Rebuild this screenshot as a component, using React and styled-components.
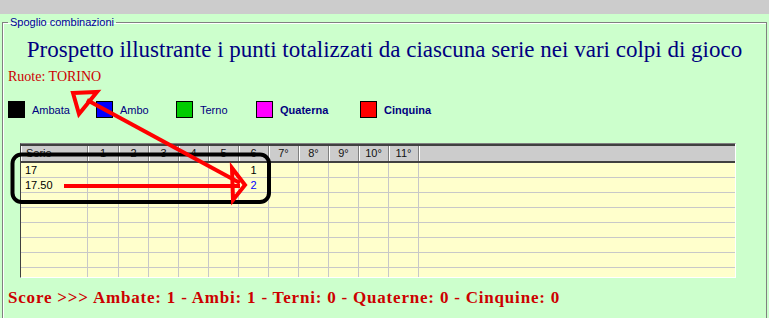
import React from 'react';
import styled, { createGlobalStyle } from 'styled-components';

const GlobalStyle = createGlobalStyle`
  html, body {
    margin: 0;
    padding: 0;
    background: #ccffcc;
    font-family: "Liberation Sans", Arial, sans-serif;
  }
`;

const legendItems = [
  { label: 'Ambata', color: '#000000', width: 88 },
  { label: 'Ambo', color: '#0000ff', width: 80 },
  { label: 'Terno', color: '#00cc00', width: 80 },
  { label: 'Quaterna', color: '#ff00ff', width: 104, bold: true },
  { label: 'Cinquina', color: '#ff0000', width: 100, bold: true },
];

const headers = ['Serie', '1', '2', '3', '4', '5', '6', '7°', '8°', '9°', '10°', '11°', ''];

const rows = [
  ['17', '', '', '', '', '', '1'],
  ['17.50', '', '', '', '', '', { value: '2', hit: true }],
  [], [], [], [], [], [],
];

const App = () => {
  return (
    <Page>
      <GlobalStyle />
      <TopBar />
      <Frame>
        <FrameLegend>Spoglio combinazioni</FrameLegend>
        <Title>Prospetto illustrante i punti totalizzati da ciascuna serie nei vari colpi di gioco</Title>
        <Wheel>Ruote: TORINO</Wheel>
        <KeyRow>
          {legendItems.map(item => (
            <KeyItem key={item.label} width={item.width}>
              <Swatch color={item.color} />
              <KeyLabel bold={item.bold}>{item.label}</KeyLabel>
            </KeyItem>
          ))}
        </KeyRow>
        <Grid>
          <HeaderRow>
            {headers.map((h, i) => (
              <HeaderCell key={i} first={i === 0}>{h}</HeaderCell>
            ))}
          </HeaderRow>
          <Body>
            {rows.map((row, r) => (
              <Row key={r}>
                {headers.map((_, c) => {
                  const cell = row[c];
                  const value = cell && typeof cell === 'object' ? cell.value : cell;
                  return (
                    <Cell key={c} first={c === 0} hit={cell && cell.hit}>{value}</Cell>
                  );
                })}
              </Row>
            ))}
          </Body>
        </Grid>
        <Score>Score &gt;&gt;&gt; Ambate: 1 - Ambi: 1 - Terni: 0 - Quaterne: 0 - Cinquine: 0</Score>
      </Frame>
      <Marks width="769" height="318" viewBox="0 0 769 318">
        <rect x="12.5" y="154.5" width="256.5" height="47.5" rx="9" fill="none" stroke="#000" strokeWidth="4" />
        <g fill="none" stroke="#ff0000" strokeWidth="4" strokeLinejoin="miter">
          <line x1="87" y1="100" x2="240" y2="183" />
          <polygon points="73,93 97,92 79,114" />
          <line x1="64" y1="186" x2="240" y2="186" />
          <polygon points="232,168 245,185 233,200" />
        </g>
      </Marks>
    </Page>
  );
};

export default App;

const Page = styled.div`
  position: relative;
  width: 769px;
  height: 318px;
  overflow: hidden;
`;

const TopBar = styled.div`
  height: 14px;
  background: #cccccc;
`;

const Frame = styled.fieldset`
  margin: 1px 2px 0 2px;
  padding: 0 5px 40px 5px;
  border: 1px solid #808080;
  box-shadow: inset 1px 1px 0 #ffffff;
  min-width: 0;
`;

const FrameLegend = styled.legend`
  padding: 0 2px;
  font-size: 11px;
  line-height: 14px;
  color: #000099;
`;

const Title = styled.div`
  margin-top: 7px;
  text-align: center;
  font-family: "Liberation Serif", "Times New Roman", serif;
  font-size: 23px;
  line-height: 27px;
  color: #000080;
`;

const Wheel = styled.div`
  margin-top: 6px;
  font-family: "Liberation Serif", "Times New Roman", serif;
  font-size: 14px;
  line-height: 16px;
  color: #cc0000;
`;

const KeyRow = styled.div`
  display: flex;
  margin-top: 16px;
  height: 17px;
`;

const KeyItem = styled.div`
  display: flex;
  align-items: center;
  gap: 7px;
  width: ${({ width }) => width}px;
`;

const Swatch = styled.span`
  width: 15px;
  height: 15px;
  border: 1px solid #000;
  background: ${({ color }) => color};
`;

const KeyLabel = styled.span`
  font-size: 11px;
  color: #000080;
  font-weight: ${({ bold }) => (bold ? 'bold' : 'normal')};
`;

const columns = '67px 31px repeat(10, 30px) 1fr';

const Grid = styled.div`
  margin: 25px 0 0 12px;
  width: 714px;
  border: 1px solid;
  border-color: #808080 #ffffff #ffffff #404040;
  box-shadow: 1px 1px 0 #c0c0c0 inset, -1px -1px 0 #c8c8c8 inset;
`;

const HeaderRow = styled.div`
  display: grid;
  grid-template-columns: ${columns};
  height: 15px;
  background: #cccccc;
  border-top: 2px solid #404040;
  border-bottom: 2px solid #404040;
`;

const HeaderCell = styled.div`
  font-size: 11px;
  line-height: 15px;
  color: #111;
  text-align: ${({ first }) => (first ? 'left' : 'center')};
  padding-left: ${({ first }) => (first ? '5px' : '0')};
  border-right: 1px solid #808080;
  box-shadow: inset 1px 0 0 #ffffff;
  overflow: hidden;

  &:last-child {
    border-right: none;
  }
`;

const Body = styled.div`
  height: 114px;
  overflow: hidden;
  background: #ffffcc;
`;

const Row = styled.div`
  display: grid;
  grid-template-columns: ${columns};
  height: 14px;
  border-bottom: 1px solid #c8c8c8;
`;

const Cell = styled.div`
  font-size: 11px;
  line-height: 14px;
  color: ${({ hit }) => (hit ? '#0000ff' : '#000')};
  text-align: ${({ first }) => (first ? 'left' : 'center')};
  padding-left: ${({ first }) => (first ? '4px' : '0')};
  border-right: 1px solid #c8c8c8;

  &:last-child {
    border-right: none;
  }
`;

const Score = styled.div`
  margin-top: 10px;
  font-family: "Liberation Serif", "Times New Roman", serif;
  font-size: 17px;
  font-weight: bold;
  letter-spacing: 0.8px;
  line-height: 19px;
  color: #cc0000;
`;

const Marks = styled.svg`
  position: absolute;
  top: 0;
  left: 0;
  pointer-events: none;
`;
